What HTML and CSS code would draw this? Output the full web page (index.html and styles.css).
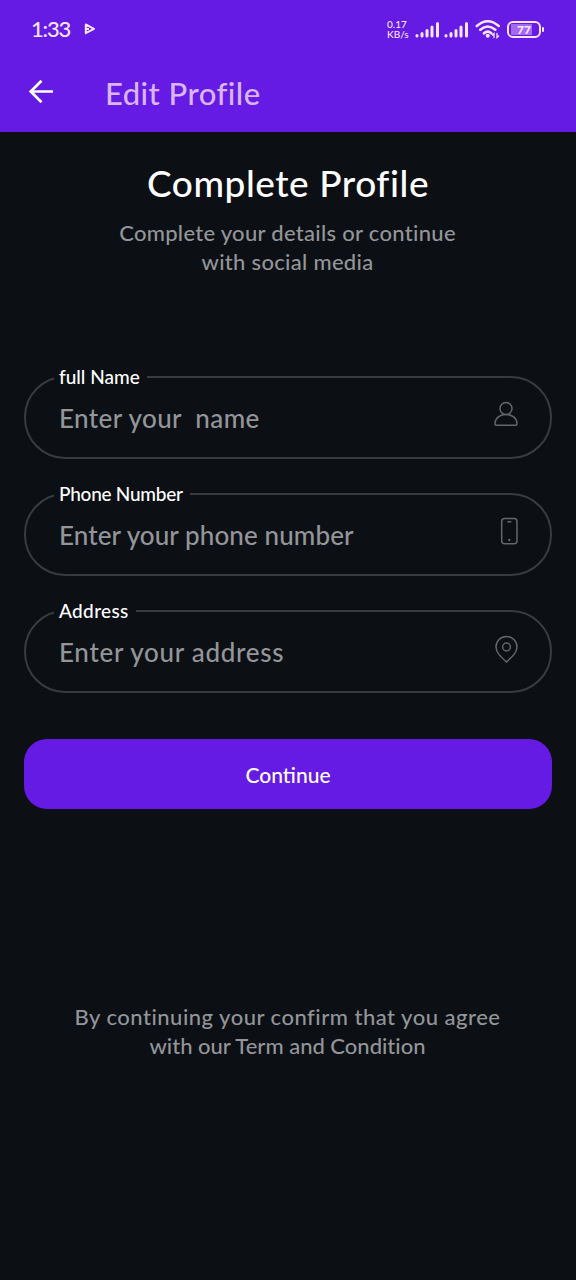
FILE: index.html
```html
<!DOCTYPE html>
<html lang="en">
<head>
<meta charset="utf-8">
<title>Edit Profile</title>
<link rel="stylesheet" href="styles.css">
</head>
<body>
<header class="top">
  <div class="status">
    <span class="clock">1:33</span>
    <svg class="play" width="12" height="12" viewBox="0 0 12 12"><path d="M1.800 1.500 10 5.800 1.800 10.200ZM1.800 6H5" /></svg>
    <div class="tray">
      <div class="speed"><span>0.17</span><span>KB/s</span></div>
      <svg class="signal" width="25" height="16" viewBox="0 0 25 16"><path d="M2 13.500v.5M7 11.500v2.500M12 8.500v5.500M17 5v9M22.500 1.500v12.500"/></svg>
      <svg class="signal second" width="25" height="16" viewBox="0 0 25 16"><path d="M2 13.500v.5M7 11.500v2.500M12 8.500v5.500M17 5v9M22.500 1.500v12.500"/></svg>
      <svg class="wifi" width="26" height="20" viewBox="0 0 26 20"><path d="M1.800 7Q12.700-2.500 23.700 7M5.300 10.700Q12.700 4.300 20.300 10.700M9 14.300Q12.700 11 16.300 14.300"/><circle cx="12.700" cy="16.800" r="2"/><path class="arrows" d="M19 18.500V14.500l-1.500 1.500M22 14.500v4l1.500-1.500"/></svg>
      <div class="battery"><span>77</span></div>
    </div>
  </div>
  <div class="appbar">
    <svg class="back" width="26" height="26" viewBox="0 0 26 26"><path d="M25 12.500H3.500M13.500 1.700 2.700 12.500l10.800 10.800"/></svg>
    <h1>Edit Profile</h1>
  </div>
</header>
<main>
  <h2>Complete Profile</h2>
  <p class="intro"><span class="line first">Complete your details or continue</span><span class="line">with social media</span></p>
  <form>
    <fieldset class="field name"><legend>full Name</legend>
      <span class="hint">Enter your  name</span>
      <svg width="26" height="30" viewBox="0 0 26 30"><circle cx="13" cy="9.500" r="6"/><path d="M3.800 26.300Q1.800 26.300 2 24C2.700 18.500 7.500 15.500 13 15.500S23.300 18.500 24 24Q24.200 26.300 22.200 26.300Z"/></svg>
    </fieldset>
    <fieldset class="field phone"><legend>Phone Number</legend>
      <span class="hint">Enter your phone number</span>
      <svg width="26" height="30" viewBox="0 0 26 30"><rect x="8.700" y="2.500" width="15.300" height="25.300" rx="3"/><path d="M14.300 5.800h4"/><circle class="dot" cx="16.300" cy="24" r="1.200"/></svg>
    </fieldset>
    <fieldset class="field address"><legend>Address</legend>
      <span class="hint">Enter your address</span>
      <svg width="26" height="30" viewBox="0 0 26 30"><path d="M13.500 28C8 23 3 18.500 3 12.900a10.500 10.500 0 0 1 21 0C24 18.500 19 23 13.500 28Z"/><circle cx="13.500" cy="13" r="3.900"/></svg>
    </fieldset>
    <button type="button">Continue</button>
  </form>
  <p class="terms"><span class="line first">By continuing your confirm that you agree</span><span class="line">with our Term and Condition</span></p>
</main>
</body>
</html>
```

FILE: styles.css
```css
* { box-sizing: border-box; }
body {
  margin: 0;
  width: 576px;
  height: 1280px;
  overflow: hidden;
  background: #0c0f14;
  color: #fff;
  font-family: Lato, "Liberation Sans", sans-serif;
  font-weight: 500;
  font-variant-ligatures: none;
}
svg { fill: none; stroke: currentColor; flex: none; }
h1, h2, p { margin: 0; font-weight: 500; white-space: nowrap; }

.top { height: 132px; background: #651be4; }
.status {
  height: 58px;
  padding: 0 32px 0 31px;
  display: flex;
  align-items: center;
  color: #f8e4ff;
}
.clock { font-size: 22px; letter-spacing: -1.200px; width: 53px; margin-top: -1px; }
.play { stroke-width: 2; stroke-linejoin: round; }
.tray { margin-left: auto; display: flex; align-items: center; }
.speed {
  width: 23px;
  margin-right: 5px;
  display: flex;
  flex-direction: column;
  font-size: 10px;
  line-height: 10.500px;
}
.signal { stroke-width: 3; stroke-linecap: round; margin-top: 1px; }
.second { margin-left: 4px; }
.wifi { margin-left: 6px; stroke-width: 2.600; stroke-linecap: round; }
.wifi circle { fill: currentColor; stroke: none; }
.wifi .arrows { stroke-width: 1.300; }
.battery {
  position: relative;
  width: 34px;
  height: 17px;
  margin: 0 3px 0 6px;
  border: 2px solid currentColor;
  border-radius: 6px;
  display: flex;
  justify-content: center;
  align-items: center;
  font-size: 12px;
  font-weight: 900;
  background: linear-gradient(#a568f0, #a568f0) 2px 1px / 21px 11px no-repeat;
}
.battery::after {
  content: "";
  position: absolute;
  right: -5px;
  top: 4px;
  width: 2px;
  height: 5px;
  border-radius: 1px;
  background: currentColor;
}
.appbar { height: 74px; padding: 0 0 6px 28px; display: flex; align-items: center; }
.back { stroke-width: 2.700; }
h1 { margin: 2px 0 0 51px; font-size: 31px; letter-spacing: 0.450px; color: #dab5fa; }

main { padding: 28px 24px 0; }
h2 { font-size: 37px; line-height: 46px; letter-spacing: 0.550px; text-align: center; }
.intro, .terms { color: #939599; font-size: 22px; line-height: 29.300px; text-align: center; }
.intro { margin-top: 12px; }
.line { display: block; margin-left: -1px; }
.intro .line { letter-spacing: 0.300px; }
.terms .first { letter-spacing: 0.500px; }
form { margin-top: 90px; }
.field {
  height: 92px;
  margin: 0 0 25.300px;
  min-width: 0;
  padding: 0 31px 0 28px;
  border: 2px solid #393b3f;
  border-radius: 41px;
  display: flex;
  justify-content: space-between;
  align-items: center;
  color: #64666a;
}
legend { padding: 0 7px 0 5px; font-size: 19px; line-height: 20px; color: #fff; }
.hint { margin-top: -8px; padding-left: 5px; font-size: 26px; line-height: 34px; color: #939599; white-space: pre; }
.name .hint { letter-spacing: 0.400px; }
.phone .hint { letter-spacing: 0.100px; }
.address .hint { letter-spacing: 0.700px; }
.phone legend { letter-spacing: -0.250px; }
.address legend { letter-spacing: 0.350px; }
.field svg { stroke-width: 1.500; margin-top: -15px; }
.field .dot { fill: currentColor; stroke: none; }
button {
  display: block;
  width: 100%;
  height: 70px;
  margin-top: 46px;
  padding: 0;
  border: 0;
  border-radius: 23px;
  background: #651be4;
  color: #fff;
  font: 500 21px Lato, "Liberation Sans", sans-serif;
}
.terms { margin-top: 193px; }
```
